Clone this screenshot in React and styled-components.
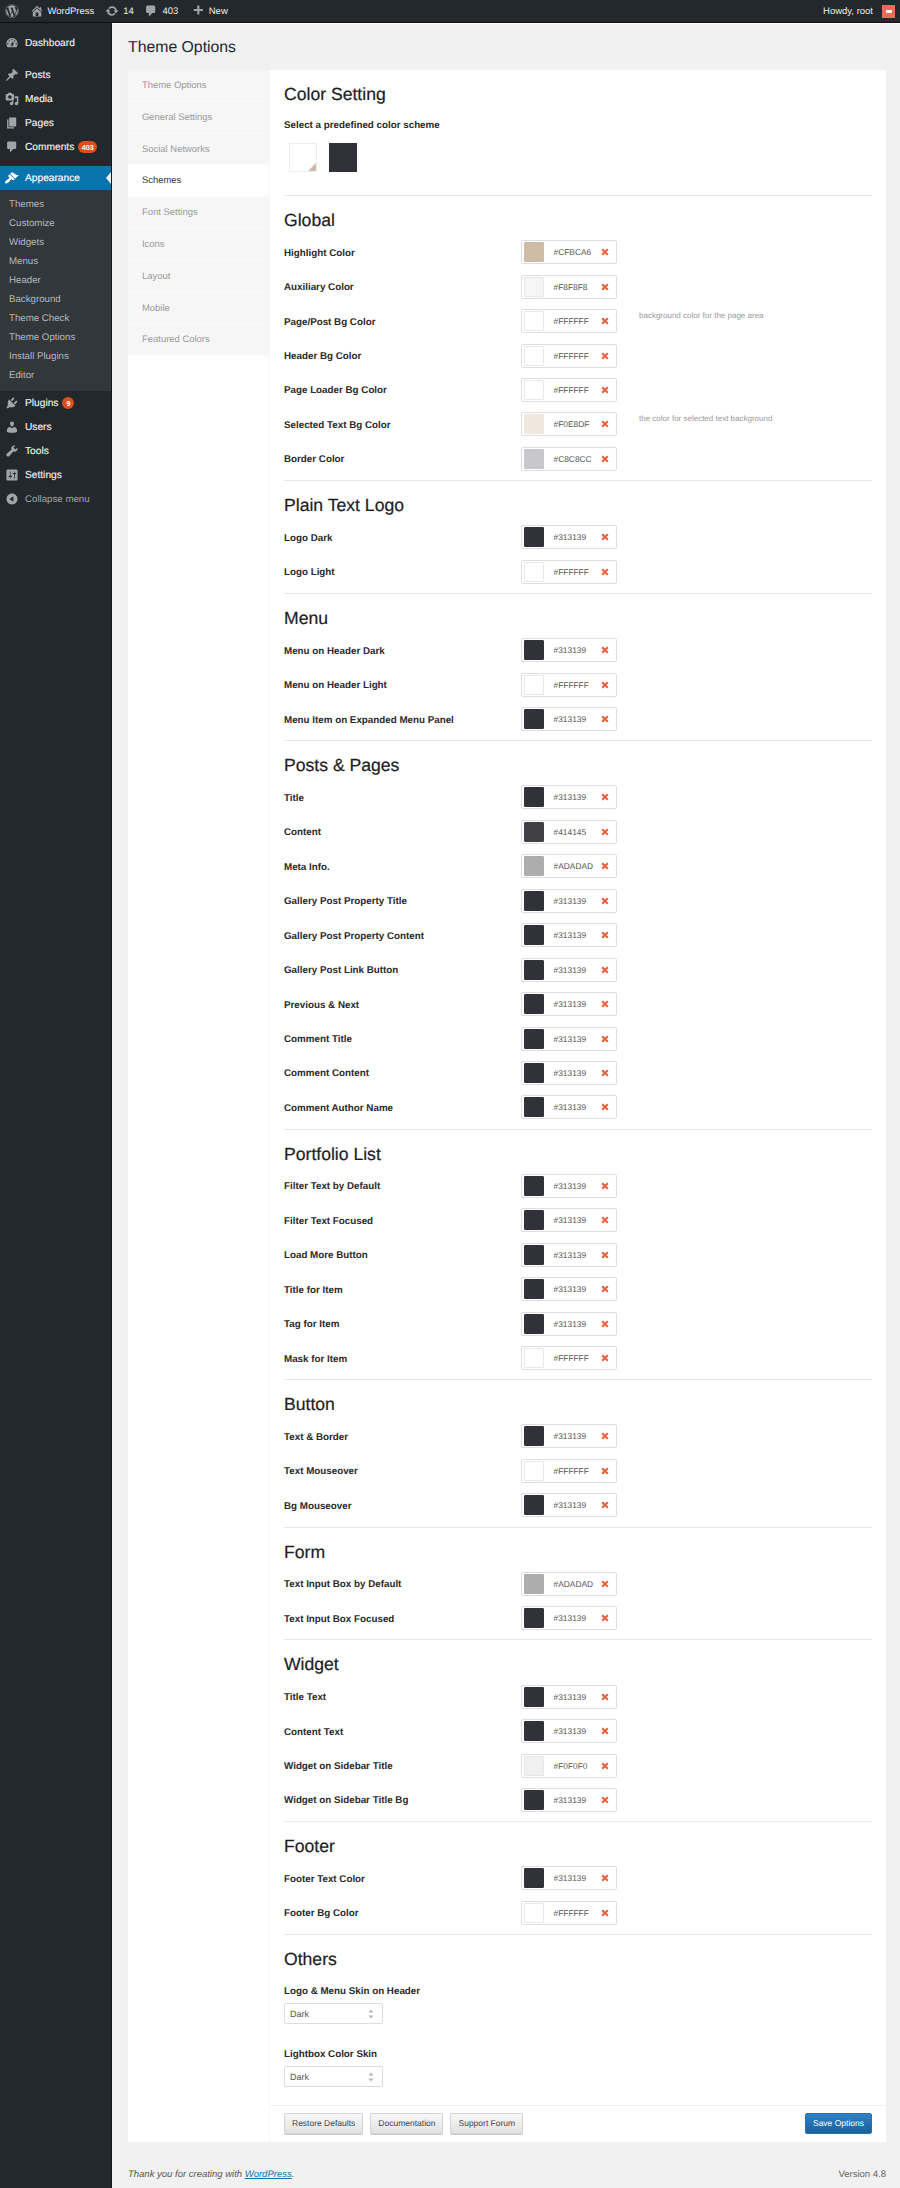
import React from 'react';
import styled, { createGlobalStyle } from 'styled-components';
import { FaWordpress } from 'react-icons/fa';

const Global = createGlobalStyle`
  html, body { margin: 0; padding: 0; background: #f1f1f1; }
  body { font-family: "Liberation Sans", Arial, sans-serif; color: #222; width: 900px; text-rendering: geometricPrecision; }
  * { box-sizing: border-box; }
`;

const Page = styled.div`width: 900px; height: 2188px; overflow: hidden; display: flex; flex-direction: column;`;
const AdminBar = styled.header`
  height: 23px; flex: none; background: #23282d; border-bottom: 1px solid #0d0f11; color: #eee;
  display: flex; align-items: center; font-size: 9.5px; padding-right: 5px;
`;
const BarItem = styled.div`display: flex; align-items: center; gap: ${p => p.$gap || 4}px; margin-left: ${p => p.$ml || 0}px; svg { color: #a0a5aa; flex: none; }`;
const Spacer = styled.div`flex: 1;`;
const Avatar = styled.div`width: 13px; height: 13px; background: #f0685a; margin-left: 5px; display: flex; align-items: center; justify-content: center;`;
const AvatarMark = styled.div`width: 6px; height: 3px; background: #fff; border-radius: 1px;`;
const Body = styled.div`flex: 1; display: flex; min-height: 0;`;
const Sidebar = styled.nav`width: 112px; flex: none; background: #23282d; padding-top: 8px; border-right: 1px solid #15181b;`;
const MenuGroup = styled.div`margin-bottom: ${p => p.$mb || 0}px;`;
const MenuItem = styled.div`
  height: 24px; display: flex; align-items: center; position: relative; font-size: 10.2px; color: ${p => p.$active ? '#fff' : '#eee'};
  background: ${p => p.$active ? '#0a74ad' : 'transparent'};
  -webkit-text-stroke: .15px currentColor;
`;
const MenuIcon = styled.span`width: 25px; flex: none; display: flex; justify-content: center; padding-right: 1px; color: ${p => p.$active ? '#fff' : '#a0a5aa'};`;
const Arrow = styled.span`position: absolute; right: 0; top: 6px; border: 6px solid transparent; border-right-color: #f1f1f1; border-left-width: 0; border-right-width: 5px;`;
const Badge = styled.span`
  margin-left: 4px; height: 12px; min-width: 12px; padding: 0 3.5px; border-radius: 6px; background: #d8501c; color: #fff; font-size: 7.2px; font-weight: bold;
  display: inline-flex; align-items: center; justify-content: center; -webkit-text-stroke: 0;
`;
const SubMenu = styled.div`background: #32373c; padding: 5px 0 6px 9px;`;
const SubItem = styled.div`height: 19.05px; line-height: 19px; font-size: 9.7px; color: #b4b9be;`;
const Collapse = styled(MenuItem)`color: #a0a5aa; font-size: 9.7px; -webkit-text-stroke: 0;`;

const Main = styled.main`flex: 1; padding: 0 14px 0 16px; min-width: 0; border-top: 1px solid #fff; display: flex; flex-direction: column;`;
const Title = styled.h1`margin: 0; height: 46px; line-height: 47px; font-weight: normal; font-size: 15.8px; color: #23282d;`;
const Panel = styled.section`display: flex; height: 2072px; background: #fff;`;
const Tabs = styled.ul`list-style: none; margin: 0; padding: 0; width: 142px; flex: none; border-right: 1px solid #f7f7f7;`;
const Tab = styled.li`
  height: 31.8px; line-height: 32px; padding-left: 14px; font-size: 9.45px; border-bottom: 1px solid #fbfbfb;
  background: ${p => p.$active ? '#fff' : '#f6f6f6'}; color: ${p => p.$active ? '#333' : '#999'};
`;
const Content = styled.div`flex: 1; min-width: 0; display: flex; flex-direction: column;`;
const Section = styled.div`margin: 0 14px; padding: 12px 0 3px; border-bottom: 1px solid #e8e8e8; &:last-of-type { border-bottom: 0; }`;
const TopSection = styled(Section)`height: 126px;`;
const Heading = styled.h2`margin: 0 0 4px; height: 24px; line-height: 24px; font-size: 17.6px; font-weight: normal; color: #1d1d1f; -webkit-text-stroke: .2px currentColor;`;
const FieldLabel = styled.div`font-size: 9.8px; font-weight: bold; color: #2a2a2a; width: 237px; flex: none;`;
const SchemeLabel = styled(FieldLabel)`width: auto; margin-top: 13px; line-height: 14px;`;
const Schemes = styled.div`display: flex; gap: 12px; margin: 10px 0 0 5px;`;
const Scheme = styled.div`width: 28px; height: 29px; position: relative; background: ${p => p.$bg}; border: 1px solid ${p => p.$line};`;
const Corner = styled.span`position: absolute; right: 0; bottom: 0; border-style: solid; border-width: 0 0 8px 8px; border-color: transparent transparent #cfbca6 transparent;`;
const Row = styled.div`height: 34.45px; display: flex; align-items: center;`;
const ColorBox = styled.div`width: 96px; height: 24px; flex: none; border: 1px solid #dedede; border-radius: 2px; display: flex; align-items: center; padding-left: 1.5px; background: #fff; margin-top: -2px;`;
const Swatch = styled.span`width: 20px; height: 20px; flex: none; border: 1px solid ${p => p.$line}; background: ${p => p.$bg}; border-radius: 1px;`;
const Hex = styled.span`margin-left: 10px; font-size: 8.4px; color: #555; width: 45.5px; flex: none;`;
const Remove = styled.svg`width: 8px; height: 8px; flex: none; margin-left: 2px;`;
const Hint = styled.span`margin: 0 0 14px 22px; font-size: 8px; color: #999;`;
const SelectLabel = styled(FieldLabel)`width: auto; line-height: 14px; margin-top: ${p => p.$mt}px;`;
const Select = styled.div`width: 99px; height: 21px; margin-top: 4px; border: 1px solid #dcdcdc; border-radius: 2px; display: flex; align-items: center; justify-content: space-between; padding: 0 8px 0 5px; font-size: 9px; color: #555;`;
const FormFooter = styled.footer`margin-top: auto; height: 37px; border-top: 1px solid #f0f0f0; padding: 7px 14px 0; display: flex; gap: 7px;`;
const Button = styled.div`
  height: 21px; padding: 0 7px; border: 1px solid #d4d4d4; border-radius: 2px; font-size: 8.5px; line-height: 19px; color: #444;
  background: linear-gradient(#f8f8f8, #e2e2e2); box-shadow: 0 1px 0 #ccc;
`;
const SaveButton = styled(Button)`margin-left: auto; background: linear-gradient(#2f81c3, #1c609f); border-color: #2a72ad; color: #fff; box-shadow: none;`;
const PageFooter = styled.div`display: flex; justify-content: space-between; align-items: center; margin-top: 23px; height: 18px; font-size: 9.5px; color: #666;`;
const Thanks = styled.em`color: #555;`;
const Link = styled.a`color: #0a74ad; text-decoration: underline;`;

const ICONS = {
  dashboard: 'M3.76 16h12.48c1.1-1.37 1.76-3.11 1.76-5 0-4.42-3.58-8-8-8s-8 3.58-8 8c0 1.89.66 3.63 1.76 5zM10 4c.55 0 1 .45 1 1s-.45 1-1 1-1-.45-1-1 .45-1 1-1zM6 6c.55 0 1 .45 1 1s-.45 1-1 1-1-.45-1-1 .45-1 1-1zm8 0c.55 0 1 .45 1 1s-.45 1-1 1-1-.45-1-1 .45-1 1-1zm-5.37 5.55L12 7v6c0 1.1-.9 2-2 2s-2-.9-2-2c0-.57.24-1.08.63-1.45zM4 10c.55 0 1 .45 1 1s-.45 1-1 1-1-.45-1-1 .45-1 1-1zm12 0c.55 0 1 .45 1 1s-.45 1-1 1-1-.45-1-1 .45-1 1-1zm-5 3c0-.55-.45-1-1-1s-1 .45-1 1 .45 1 1 1 1-.45 1-1z',
  post: 'M10.44 3.02l1.82-1.82 6.36 6.35-1.83 1.82c-1.05-.68-2.48-.57-3.41.36l-.75.75c-.92.93-1.04 2.35-.35 3.41l-1.83 1.82-2.41-2.41-2.8 2.79c-.42.42-3.38 2.71-3.8 2.29s1.86-3.39 2.28-3.81l2.79-2.79L4.1 9.36l1.83-1.82c1.05.69 2.48.57 3.4-.36l.75-.75c.93-.92 1.05-2.35.36-3.41z',
  media: 'M13 11V4c0-.55-.45-1-1-1h-1.67L9 1H5L3.67 3H2c-.55 0-1 .45-1 1v7c0 .55.45 1 1 1h10c.55 0 1-.45 1-1zM7 4.5c1.38 0 2.5 1.12 2.5 2.5S8.38 9.5 7 9.5 4.5 8.38 4.5 7 5.62 4.5 7 4.5zM14 6h5v10.5c0 1.38-1.12 2.5-2.5 2.5S14 17.88 14 16.5s1.12-2.5 2.5-2.5c.17 0 .34.02.5.05V9h-3V6zm-4 8.05V13h2v3.5c0 1.38-1.12 2.5-2.5 2.5S7 17.88 7 16.5 8.12 14 9.5 14c.17 0 .34.02.5.05z',
  page: 'M6 15V2h10v13H6zm-1 1h8v2H3V5h2v11z',
  comment: 'M5 2h9c1.1 0 2 .9 2 2v7c0 1.1-.9 2-2 2h-2l-5 5v-5H5c-1.1 0-2-.9-2-2V4c0-1.1.9-2 2-2z',
  appearance: 'M14.48 11.06L7.41 3.99l1.5-1.5c.5-.56 2.3-.47 3.51.32 1.21.8 1.43 1.28 2.91 2.1 1.18.64 2.45 1.26 4.45.85zm-.71.71L6.7 4.7 4.93 6.47c-.39.39-.39 1.02 0 1.41l1.06 1.06c.39.39.39 1.03 0 1.42-.6.6-1.43 1.11-2.21 1.69-.35.26-.7.53-1.01.84C1.43 13.23 0 15.6 0 16.35c0 .94.5 1.64 1.45 1.64.77 0 3.12-1.43 4.46-2.77.31-.31.58-.66.84-1.01.58-.78 1.09-1.61 1.69-2.21.39-.39 1.03-.39 1.42 0l1.06 1.06c.39.39 1.02.39 1.41 0z',
  plugin: 'M13.11 4.36L9.87 7.6 8 5.73l3.24-3.24c.35-.34 1.05-.2 1.56.32.52.51.66 1.21.31 1.55zm-8 1.77l.91-1.12 9.01 9.01-1.19.84c-.71.71-2.63 1.16-3.82 1.16H6.14L4.9 17.26c-.59.59-1.54.59-2.12 0-.59-.58-.59-1.53 0-2.12l1.24-1.24v-3.88c0-1.13.4-3.19 1.09-3.89zm7.26 3.97l3.24-3.24c.34-.35 1.04-.21 1.55.31.52.51.66 1.21.31 1.55l-3.24 3.25z',
  users: 'M10 9.25c-2.27 0-2.73-3.44-2.73-3.44C7 4.02 7.82 2 9.97 2c2.16 0 2.98 2.02 2.71 3.81 0 0-.41 3.44-2.68 3.44zm0 2.57L12.72 10c2.39 0 4.52 2.33 4.52 4.53v2.49s-3.65 1.13-7.24 1.13c-3.65 0-7.24-1.13-7.24-1.13v-2.49c0-2.25 1.94-4.48 4.47-4.48z',
  tools: 'M16.68 9.77c-1.34 1.34-3.3 1.67-4.95.99l-5.41 6.52c-.99.99-2.59.99-3.58 0s-.99-2.59 0-3.57l6.52-5.42c-.68-1.65-.35-3.61.99-4.95 1.28-1.28 3.12-1.62 4.72-1.06l-2.89 2.89 2.82 2.82 2.86-2.87c.53 1.58.18 3.39-1.08 4.65z',
  settings: 'M18 16V4c0-1.1-.9-2-2-2H4c-1.1 0-2 .9-2 2v12c0 1.1.9 2 2 2h12c1.1 0 2-.9 2-2zM8 11h1c.55 0 1 .45 1 1s-.45 1-1 1H8v1.5c0 .28-.22.5-.5.5s-.5-.22-.5-.5V13H6c-.55 0-1-.45-1-1s.45-1 1-1h1V5.5c0-.28.22-.5.5-.5s.5.22.5.5V11zm5-2h-1c-.55 0-1-.45-1-1s.45-1 1-1h1V5.5c0-.28.22-.5.5-.5s.5.22.5.5V7h1c.55 0 1 .45 1 1s-.45 1-1 1h-1v5.5c0 .28-.22.5-.5.5s-.5-.22-.5-.5V9z',
  collapse: 'M10 2.16c4.33 0 7.84 3.51 7.84 7.84s-3.51 7.84-7.84 7.84S2.16 14.33 2.16 10 5.71 2.16 10 2.16zm2 11.72V6.12L6.18 9.97z',
  home: 'M16 8.5l1.53 1.53-1.06 1.06L10 4.62l-6.47 6.47-1.06-1.06L10 2.5l4 4v-2h2v4zm-6-2.46l6 5.99V18H4v-5.97zM12 17v-5H8v5h4z',
  update: 'M10.2 3.28c3.53 0 6.43 2.61 6.92 6h2.08l-3.5 4-3.5-4h2.32c-.45-1.97-2.21-3.45-4.32-3.45-1.45 0-2.73.71-3.54 1.78L4.95 5.66C6.23 4.2 8.11 3.28 10.2 3.28zm-.4 13.44c-3.52 0-6.43-2.61-6.92-6H.8l3.5-4c1.17 1.33 2.33 2.67 3.5 4H5.48c.45 1.97 2.21 3.45 4.32 3.45 1.45 0 2.73-.71 3.54-1.78l1.71 1.95c-1.28 1.46-3.15 2.38-5.25 2.38z',
  plus: 'M17 7v3h-5v5H9v-5H4V7h5V2h3v5h5z',
};
const Dash = ({ name, s = 14 }) => (
  <svg width={s} height={s} viewBox="0 0 20 20" fill="currentColor"><path d={ICONS[name]} /></svg>
);
const X = () => (
  <Remove viewBox="0 0 10 10"><path d="M1.5 1.5L8.5 8.5M8.5 1.5L1.5 8.5" stroke="#e8603c" strokeWidth="2.6" /></Remove>
);
const Updown = () => (
  <svg width="6" height="10" viewBox="0 0 6 10"><path d="M3 0.5L5.5 3.5H.5zM3 9.5L.5 6.5H5.5z" fill="#b5b5b5" /></svg>
);

const SW = {
  '#313139': ['#313139', '#313139'], '#FFFFFF': ['#fff', '#e8e8e8'], '#CFBCA6': ['#cfbca6', '#cfbca6'], '#F8F8F8': ['#f6f6f6', '#e8e8e8'],
  '#F0E8DF': ['#f0e8df', '#efe8df'], '#C8C8CC': ['#c8c8cc', '#c8c8cc'], '#414145': ['#414145', '#414145'], '#ADADAD': ['#adadad', '#adadad'], '#F0F0F0': ['#f0f0f0', '#e6e6e6'],
};
const D = '#313139', W = '#FFFFFF', A = '#ADADAD';
const sections = [
  ['Global', [['Highlight Color', '#CFBCA6'], ['Auxiliary Color', '#F8F8F8'], ['Page/Post Bg Color', W, 'background color for the page area'], ['Header Bg Color', W], ['Page Loader Bg Color', W], ['Selected Text Bg Color', '#F0E8DF', 'the color for selected text background'], ['Border Color', '#C8C8CC']]],
  ['Plain Text Logo', [['Logo Dark', D], ['Logo Light', W]]],
  ['Menu', [['Menu on Header Dark', D], ['Menu on Header Light', W], ['Menu Item on Expanded Menu Panel', D]]],
  ['Posts & Pages', [['Title', D], ['Content', '#414145'], ['Meta Info.', A], ['Gallery Post Property Title', D], ['Gallery Post Property Content', D], ['Gallery Post Link Button', D], ['Previous & Next', D], ['Comment Title', D], ['Comment Content', D], ['Comment Author Name', D]]],
  ['Portfolio List', [['Filter Text by Default', D], ['Filter Text Focused', D], ['Load More Button', D], ['Title for Item', D], ['Tag for Item', D], ['Mask for Item', W]]],
  ['Button', [['Text & Border', D], ['Text Mouseover', W], ['Bg Mouseover', D]]],
  ['Form', [['Text Input Box by Default', A], ['Text Input Box Focused', D]]],
  ['Widget', [['Title Text', D], ['Content Text', D], ['Widget on Sidebar Title', '#F0F0F0'], ['Widget on Sidebar Title Bg', D]]],
  ['Footer', [['Footer Text Color', D], ['Footer Bg Color', W]]],
];
const tabs = ['Theme Options', 'General Settings', 'Social Networks', 'Schemes', 'Font Settings', 'Icons', 'Layout', 'Mobile', 'Featured Colors'];
const subs = ['Themes', 'Customize', 'Widgets', 'Menus', 'Header', 'Background', 'Theme Check', 'Theme Options', 'Install Plugins', 'Editor'];

export default function App() {
  return (
    <Page>
      <Global />
      <AdminBar>
        <BarItem $ml={5}><FaWordpress size={14} /></BarItem>
        <BarItem $ml={10.5}><Dash name="home" />WordPress</BarItem>
        <BarItem $ml={11}><Dash name="update" />14</BarItem>
        <BarItem $ml={10.5}><Dash name="comment" />403</BarItem>
        <BarItem $ml={12.5}><Dash name="plus" />New</BarItem>
        <Spacer />
        <BarItem>Howdy, root<Avatar><AvatarMark /></Avatar></BarItem>
      </AdminBar>
      <Body>
        <Sidebar>
          <MenuGroup $mb={8}>
            <MenuItem><MenuIcon><Dash name="dashboard" /></MenuIcon>Dashboard</MenuItem>
          </MenuGroup>
          <MenuGroup $mb={7}>
            <MenuItem><MenuIcon><Dash name="post" /></MenuIcon>Posts</MenuItem>
            <MenuItem><MenuIcon><Dash name="media" /></MenuIcon>Media</MenuItem>
            <MenuItem><MenuIcon><Dash name="page" /></MenuIcon>Pages</MenuItem>
            <MenuItem><MenuIcon><Dash name="comment" /></MenuIcon>Comments<Badge>403</Badge></MenuItem>
          </MenuGroup>
          <MenuItem $active><MenuIcon $active><Dash name="appearance" /></MenuIcon>Appearance<Arrow /></MenuItem>
          <SubMenu>{subs.map(s => <SubItem key={s}>{s}</SubItem>)}</SubMenu>
          <MenuItem><MenuIcon><Dash name="plugin" /></MenuIcon>Plugins<Badge>9</Badge></MenuItem>
          <MenuItem><MenuIcon><Dash name="users" /></MenuIcon>Users</MenuItem>
          <MenuItem><MenuIcon><Dash name="tools" /></MenuIcon>Tools</MenuItem>
          <MenuItem><MenuIcon><Dash name="settings" /></MenuIcon>Settings</MenuItem>
          <Collapse><MenuIcon><Dash name="collapse" /></MenuIcon>Collapse menu</Collapse>
        </Sidebar>
        <Main>
          <Title>Theme Options</Title>
          <Panel>
            <Tabs>{tabs.map(t => <Tab key={t} $active={t === 'Schemes'}>{t}</Tab>)}</Tabs>
            <Content>
              <TopSection>
                <Heading>Color Setting</Heading>
                <SchemeLabel>Select a predefined color scheme</SchemeLabel>
                <Schemes>
                  <Scheme $bg="#fff" $line="#eee"><Corner /></Scheme>
                  <Scheme $bg="#313139" $line="#313139" />
                </Schemes>
              </TopSection>
              {sections.map(([name, rows]) => (
                <Section key={name}>
                  <Heading>{name}</Heading>
                  {rows.map(([label, hex, hint]) => (
                    <Row key={label}>
                      <FieldLabel>{label}</FieldLabel>
                      <ColorBox>
                        <Swatch $bg={SW[hex][0]} $line={SW[hex][1]} />
                        <Hex>{hex}</Hex>
                        <X />
                      </ColorBox>
                      {hint && <Hint>{hint}</Hint>}
                    </Row>
                  ))}
                </Section>
              ))}
              <Section>
                <Heading>Others</Heading>
                <SelectLabel $mt={14}>Logo &amp; Menu Skin on Header</SelectLabel>
                <Select>Dark<Updown /></Select>
                <SelectLabel $mt={24}>Lightbox Color Skin</SelectLabel>
                <Select>Dark<Updown /></Select>
              </Section>
              <FormFooter>
                <Button>Restore Defaults</Button>
                <Button>Documentation</Button>
                <Button>Support Forum</Button>
                <SaveButton>Save Options</SaveButton>
              </FormFooter>
            </Content>
          </Panel>
          <PageFooter>
            <Thanks>Thank you for creating with <Link>WordPress</Link>.</Thanks>
            <span>Version 4.8</span>
          </PageFooter>
        </Main>
      </Body>
    </Page>
  );
}
